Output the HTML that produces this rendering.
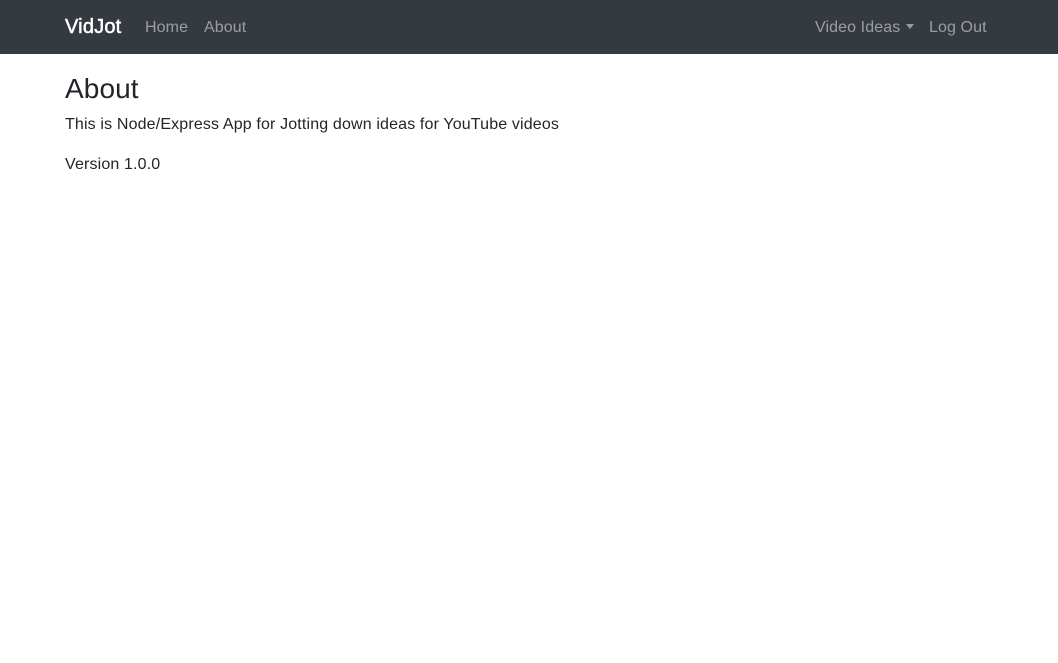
<!DOCTYPE html>
<html><head><meta charset="utf-8"><style>
*{box-sizing:border-box;margin:0;padding:0}
body{width:1058px;height:663px;background:#fff;font-family:"Liberation Sans",sans-serif;color:#212529;font-size:16px;line-height:1.5;overflow:hidden}
nav{height:54px;background:#343a40;position:relative}
nav a{position:absolute;top:16px;color:rgba(255,255,255,.5);text-decoration:none;font-size:16px;line-height:24px;letter-spacing:0.1px}
nav .brand{color:#fff;font-size:20px;top:13px;line-height:28px;left:65px;letter-spacing:0.2px;font-weight:bold;-webkit-text-stroke:0}
.caret{display:inline-block;width:0;height:0;border-left:4px solid transparent;border-right:4px solid transparent;border-top:5px solid rgba(255,255,255,.5);vertical-align:3px;margin-left:6px}
.c{padding-left:65px}
h1{font-size:28px;font-weight:500;line-height:34px;margin-top:18px;margin-bottom:7px;letter-spacing:0.1px}
p{margin-bottom:16px;line-height:24px;letter-spacing:0.15px}
</style></head><body>
<nav>
<a class="brand" style="font-weight:normal;-webkit-text-stroke:0.5px #fff">VidJot</a>
<a style="left:145px">Home</a>
<a style="left:204px">About</a>
<a style="left:815px">Video Ideas<span class="caret"></span></a>
<a style="left:929px">Log Out</a>
</nav>
<div class="c">
<h1>About</h1>
<p>This is Node/Express App for Jotting down ideas for YouTube videos</p>
<p>Version 1.0.0</p>
</div>
</body></html>
